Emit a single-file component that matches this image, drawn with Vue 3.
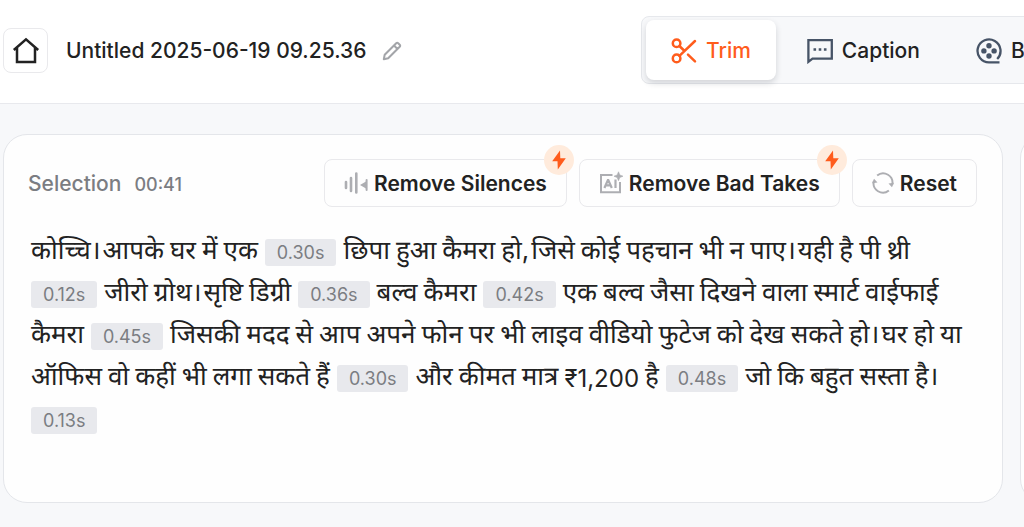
<script setup>
const source = [
  ['कोच्चि। आपके घर में एक', { gap: '0.30s' }, 'छिपा हुआ कैमरा हो, जिसे कोई पहचान भी न पाए। यही है पी थ्री'],
  [{ gap: '0.12s' }, 'जीरो ग्रोथ। सृष्टि डिग्री', { gap: '0.36s' }, 'बल्व कैमरा', { gap: '0.42s' }, 'एक बल्व जैसा दिखने वाला स्मार्ट वाईफाई'],
  ['कैमरा', { gap: '0.45s' }, 'जिसकी मदद से आप अपने फोन पर भी लाइव वीडियो फुटेज को देख सकते हो। घर हो या'],
  ['ऑफिस वो कहीं भी लगा सकते हैं', { gap: '0.30s' }, 'और कीमत मात्र ₹1,200 है', { gap: '0.48s' }, 'जो कि बहुत सस्ता है।'],
  [{ gap: '0.13s' }],
]

const lines = source.map((line) =>
  line.flatMap((part) =>
    part.gap
      ? [part]
      : part.split(' ').map((word) => ({
          word,
          stop: /[।,]$/.test(word),
          number: /\d/.test(word),
        })),
  ),
)
</script>

<template>
  <div class="page">
    <header class="topbar">
      <button class="home" aria-label="Home">
        <svg width="28" height="28" viewBox="0 0 28 28" fill="none" stroke="currentColor" stroke-width="2.5">
          <path d="M1.8 13 14 2.4 26.2 13M5 11v14h18V11" />
        </svg>
      </button>
      <h1 class="title">Untitled 2025-06-19 09.25.36</h1>
      <button class="edit" aria-label="Rename">
        <svg width="20" height="20" viewBox="0 0 20 20" fill="none" stroke="currentColor" stroke-width="2" stroke-linejoin="round">
          <path d="m1.8 18.2.9-4.4L14.2 2.3q1-1 2 0l1.5 1.5q1 1 0 2L6.2 17.3zM12 4.5 15.5 8" />
        </svg>
      </button>
      <nav class="tabs">
        <button class="tab active">
          <svg width="26" height="26" viewBox="0 0 26 26" fill="none" stroke="currentColor" stroke-width="2.5" stroke-linecap="round">
            <circle cx="5.6" cy="5.2" r="3.8" />
            <circle cx="5.6" cy="20.4" r="3.8" />
            <path d="M24 3 8.4 17.8M8.4 8l5.2 5M17 16.6 24 23.4" />
          </svg>
          Trim
        </button>
        <button class="tab">
          <svg width="26" height="26" viewBox="0 0 26 26" fill="none" stroke="currentColor" stroke-width="2.3">
            <path d="M1.4 2.2h23.4v18.4H5.5l-4.1 3.2z" />
            <path d="M6.5 11.5h2.6M11.7 11.5h2.6M16.9 11.5h2.6" stroke-width="2.6" />
          </svg>
          Caption
        </button>
        <button class="tab">
          <svg width="26" height="26" viewBox="0 0 26 26" fill="none" stroke="currentColor" stroke-width="2.3">
            <path d="M23.5 24.4H13A11.5 11.5 0 1 1 21.2 21" />
            <g fill="currentColor" stroke="none">
              <circle cx="13" cy="7.8" r="2.7" />
              <circle cx="18.1" cy="12.9" r="2.7" />
              <circle cx="13" cy="18" r="2.7" />
              <circle cx="7.9" cy="12.9" r="2.7" />
            </g>
          </svg>
          B
        </button>
      </nav>
    </header>

    <main class="workspace">
      <section class="card">
        <div class="toolbar">
          <div class="selection">
            <span>Selection</span>
            <span class="time">00:41</span>
          </div>
          <div class="actions">
            <button class="action">
              <svg width="24" height="24" viewBox="0 0 24 24" fill="none" stroke="currentColor" stroke-width="2.6" stroke-linecap="round">
                <path d="M2 11v6M7 7v13M12.3 2.5v19" />
                <path d="M22.6 9v10" stroke-width="2" />
                <path d="M16 14 22 10.5v7z" fill="currentColor" stroke="none" />
              </svg>
              Remove Silences
              <span class="badge">
                <svg width="16" height="20" viewBox="0 0 16 20" fill="currentColor"><path d="M9 .4 1.2 11.2h5.3L6.8 19.6 14.8 8.2H9.3z" /></svg>
              </span>
            </button>
            <button class="action">
              <svg width="24" height="24" viewBox="0 0 24 24" fill="none" stroke="currentColor" stroke-width="2">
                <path d="M13.5 4H2v17.2h19V11" />
                <path d="m5.4 17 3.5-8h.4L12.8 17M6.5 14.4h5M16.5 8.5V17" stroke-width="2.2" />
                <path d="M19.5.8 20.8 4 24 5.2 20.8 6.5 19.5 9.7 18.2 6.5 15 5.2 18.2 4z" fill="currentColor" stroke="currentColor" stroke-width=".6" />
              </svg>
              Remove Bad Takes
              <span class="badge">
                <svg width="16" height="20" viewBox="0 0 16 20" fill="currentColor"><path d="M9 .4 1.2 11.2h5.3L6.8 19.6 14.8 8.2H9.3z" /></svg>
              </span>
            </button>
            <button class="action">
              <svg width="22" height="22" viewBox="0 0 24 24" fill="none" stroke="currentColor" stroke-width="2.1">
                <path d="M5.6 3.8A10.2 10.2 0 0 1 22 14M18.4 20.2A10.2 10.2 0 0 1 2 10" />
                <path d="m18 12.6 3.8 4 2.2-5zM6 11.4 2.2 7.4 0 12.4z" fill="currentColor" stroke="none" />
              </svg>
              Reset
            </button>
          </div>
        </div>
        <div class="transcript" lang="hi">
          <p v-for="(line, i) in lines" :key="i" class="line">
            <template v-for="(item, j) in line" :key="j">
              <button v-if="item.gap" class="gap">{{ item.gap }}</button>
              <span v-else :class="{ stop: item.stop, number: item.number }">{{ item.word }}</span>
            </template>
          </p>
        </div>
      </section>
      <aside class="card side"></aside>
    </main>
  </div>
</template>

<style>
body {
  margin: 0;
  background: #f7f8fa;
}
</style>

<style scoped>
.page {
  min-height: 100vh;
  overflow: hidden;
  font-family: Inter, "Noto Sans Devanagari", "Noto Sans", sans-serif;
  color: #222;
}
button {
  font: inherit;
  color: inherit;
  border: 0;
  padding: 0;
  background: none;
  cursor: pointer;
}
svg {
  display: block;
  flex: none;
}
.topbar {
  display: flex;
  align-items: center;
  height: 101px;
  padding: 0 0 2px 3px;
  background: #fff;
  border-bottom: 1px solid #e8e9ed;
}
.home {
  display: grid;
  place-items: center;
  width: 45px;
  height: 45px;
  border: 1px solid #e9e9ec;
  border-radius: 8px;
  flex: none;
}
.title {
  margin: 0 0 0 18px;
  font-size: 21px;
  font-weight: 500;
  white-space: nowrap;
}
.edit {
  margin-left: 16px;
  color: #a3a5a9;
}
.tabs {
  display: flex;
  flex: none;
  box-sizing: border-box;
  width: 480px;
  height: 68px;
  margin: 0 -97px 2px auto;
  padding: 3px 4px;
  background: #f7f8fa;
  border: 1px solid #e6e8ec;
  border-radius: 8px;
}
.tab {
  display: flex;
  align-items: center;
  gap: 9px;
  padding: 2px 25px 0 31px;
  border-radius: 8px;
  font-size: 21px;
  font-weight: 500;
  white-space: nowrap;
}
.tab svg {
  color: #475467;
}
.tab.active {
  padding: 2px 25px 0;
  color: #ff5c1c;
  background: #fff;
  box-shadow: 0 3px 6px rgba(16, 24, 40, 0.16);
}
.tab.active svg {
  color: inherit;
}
.workspace {
  display: flex;
  gap: 17px;
  padding: 30px 0 24px 3px;
}
.card {
  flex: 1;
  min-width: 0;
  box-sizing: border-box;
  min-height: 369px;
  padding: 24px 25px 24px 24px;
  background: #fefefe;
  border: 1px solid #e4e6ea;
  border-radius: 24px;
}
.side {
  flex: 0 0 300px;
  margin-right: -296px;
}
.toolbar {
  display: flex;
  justify-content: space-between;
  align-items: center;
}
.selection {
  display: flex;
  align-items: baseline;
  gap: 13px;
  font-size: 21px;
  font-weight: 500;
  color: #7b7d82;
}
.time {
  font-size: 18px;
}
.actions {
  display: flex;
  gap: 12px;
}
.action {
  position: relative;
  display: flex;
  align-items: center;
  gap: 6px;
  height: 48px;
  padding: 0 19px;
  border: 1px solid #e9e9ec;
  border-radius: 8px;
  font-size: 21px;
  font-weight: 600;
  white-space: nowrap;
}
.action > svg {
  color: #adaeb2;
}
.badge {
  position: absolute;
  top: -15px;
  right: -8px;
  display: grid;
  place-items: center;
  width: 30px;
  height: 30px;
  border-radius: 50%;
  background: #ffebdc;
  color: #ff5c1c;
}
.transcript {
  padding: 24px 0 0 3px;
  font-size: 26px;
}
.line {
  display: flex;
  align-items: center;
  gap: 6px;
  height: 42px;
  margin: 0;
  white-space: nowrap;
}
.stop {
  margin-right: -4px;
}
.number {
  font-size: 24px;
}
.gap {
  height: 27px;
  margin-right: 1px;
  padding: 0 12px;
  border-radius: 3px;
  background: #e8e9ed;
  color: #7b7d82;
  font-size: 18px;
  line-height: 27px;
}
span + .gap {
  margin-left: 1px;
}
</style>
